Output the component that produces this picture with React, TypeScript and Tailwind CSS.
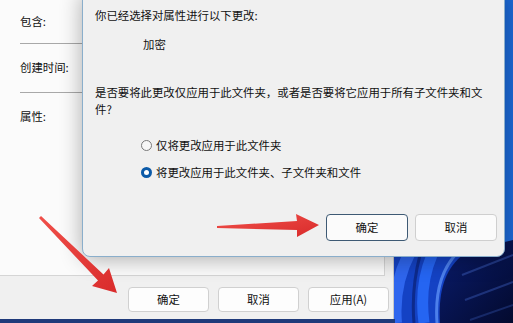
import React from 'react';

const font = { fontFamily: '"Noto Sans CJK SC", "Noto Sans", sans-serif' };

function Wallpaper() {
  return (
    <svg className="absolute inset-0" width="513" height="323" viewBox="0 0 513 323">
      <defs>
        <linearGradient id="deep" x1="0" y1="0" x2="1" y2="1">
          <stop offset="0" stopColor="#0a1c6e" />
          <stop offset="1" stopColor="#030a2e" />
        </linearGradient>
      </defs>
      <rect width="513" height="323" fill="#1442c4" />
      <rect x="505" y="0" width="8" height="250" fill="#1c6ad8" />
      <path d="M440 323 C 438 290, 445 265, 470 250 L 513 240 L 513 323 Z" fill="url(#deep)" />
      <path d="M396 323 C 394 300, 398 275, 410 252" stroke="#2f66ee" strokeWidth="12" fill="none" />
      <path d="M414 323 C 412 300, 414 278, 420 255" stroke="#0d2a8c" strokeWidth="3" fill="none" />
      <path d="M424 323 C 421 300, 423 276, 432 255" stroke="#2565f2" strokeWidth="11" fill="none" />
      <path d="M437 323 C 435 295, 440 270, 458 252" stroke="#5a8ef5" strokeWidth="3" fill="none" opacity="0.8" />
      <path d="M462 275 L 513 255" stroke="#3a5bb8" strokeWidth="2" opacity="0.5" />
      <path d="M465 300 L 513 282" stroke="#3a5bb8" strokeWidth="2" opacity="0.45" />
      <path d="M470 320 L 513 305" stroke="#3a5bb8" strokeWidth="2" opacity="0.35" />
      <rect x="0" y="319" width="395" height="4" fill="#1f3a7a" />
    </svg>
  );
}

function Arrows() {
  return (
    <svg className="absolute inset-0 pointer-events-none" width="513" height="323" viewBox="0 0 513 323">
      <defs>
        <linearGradient id="red" x1="0" y1="0" x2="1" y2="1">
          <stop offset="0" stopColor="#f0504a" />
          <stop offset="1" stopColor="#d92b2b" />
        </linearGradient>
      </defs>
      <polygon
        points="39,218 98,280.5 92,286 117,293 109,268 103.5,274.5 41,216"
        fill="url(#red)"
      />
      <polygon
        points="217,226 297,221 296,214 319,225 297,237 297,230 217,228"
        fill="url(#red)"
      />
    </svg>
  );
}

function WinButton({ label, primary }: { label: string; primary?: boolean }) {
  return (
    <div
      className={`flex items-center justify-center rounded-[4px] text-[11.4px] text-[#111] ${
        primary
          ? 'w-[82px] h-[27px] bg-[#fbfbfb] border border-[#3e5a74]'
          : 'w-[82px] h-[27px] bg-[#fbfbfb] border border-[#cfcfcf]'
      }`}
    >
      {label}
    </div>
  );
}

export default function App() {
  return (
    <div className="relative w-[513px] h-[323px] overflow-hidden" style={font}>
      <Wallpaper />

      {/* properties window behind */}
      <div className="absolute left-0 top-0 w-[394px] h-[319px] bg-[#f0f0f0] flex flex-col border-r border-[#c8c8c8]">
        <div className="h-[276px] w-[385px] bg-[#fbfbfb] border-b border-r border-[#d5d5d5] pl-[20px] text-[11.4px] text-[#111]">
          <div className="h-[44px] flex items-center border-b border-[#a8a8a8]">包含:</div>
          <div className="h-[49px] flex items-center border-b border-[#a8a8a8]">创建时间:</div>
          <div className="h-[48px] flex items-center">属性:</div>
        </div>
        <div className="flex justify-end gap-[9px] pr-[4px] pt-[11px]">
          <div className="w-[81px] h-[25px] flex items-center justify-center rounded-[4px] border border-[#d0d0d0] bg-[#fdfdfd] text-[11.4px] text-[#111]">确定</div>
          <div className="w-[81px] h-[25px] flex items-center justify-center rounded-[4px] border border-[#d0d0d0] bg-[#fdfdfd] text-[11.4px] text-[#111]">取消</div>
          <div className="w-[81px] h-[25px] flex items-center justify-center rounded-[4px] border border-[#d0d0d0] bg-[#fdfdfd] text-[11.4px] text-[#111]">应用(A)</div>
        </div>
      </div>

      {/* confirm attribute changes dialog */}
      <div className="absolute left-[82px] top-[-8px] w-[423px] h-[265px] bg-[#f0f0f0] border border-[#8aaecb] rounded-b-[8px] shadow-[0_2px_22px_rgba(0,0,0,0.32)] pt-[14px] pl-[12px] pr-[7px] text-[11.4px] text-[#111] leading-[17px]">
        <p>你已经选择对属性进行以下更改:</p>
        <p className="mt-[12px] pl-[48px]">加密</p>
        <p className="mt-[31px]">
          是否要将此更改仅应用于此文件夹，或者是否要将它应用于所有子文件夹和文
          <br />
          件?
        </p>
        <div className="mt-[19px] pl-[46px] flex items-center gap-[4px]">
          <span className="w-[11px] h-[11px] rounded-full border border-[#7a7a7a] bg-[#f7f7f7]" />
          <span>仅将更改应用于此文件夹</span>
        </div>
        <div className="mt-[10px] pl-[46px] flex items-center gap-[4px]">
          <span className="w-[11px] h-[11px] rounded-full bg-[#0b5aa8] flex items-center justify-center">
            <span className="w-[5px] h-[5px] rounded-full bg-white" />
          </span>
          <span>将更改应用于此文件夹、子文件夹和文件</span>
        </div>
        <div className="mt-[33px] flex justify-end gap-[7px]">
          <WinButton label="确定" primary />
          <WinButton label="取消" />
        </div>
      </div>

      <Arrows />
    </div>
  );
}
